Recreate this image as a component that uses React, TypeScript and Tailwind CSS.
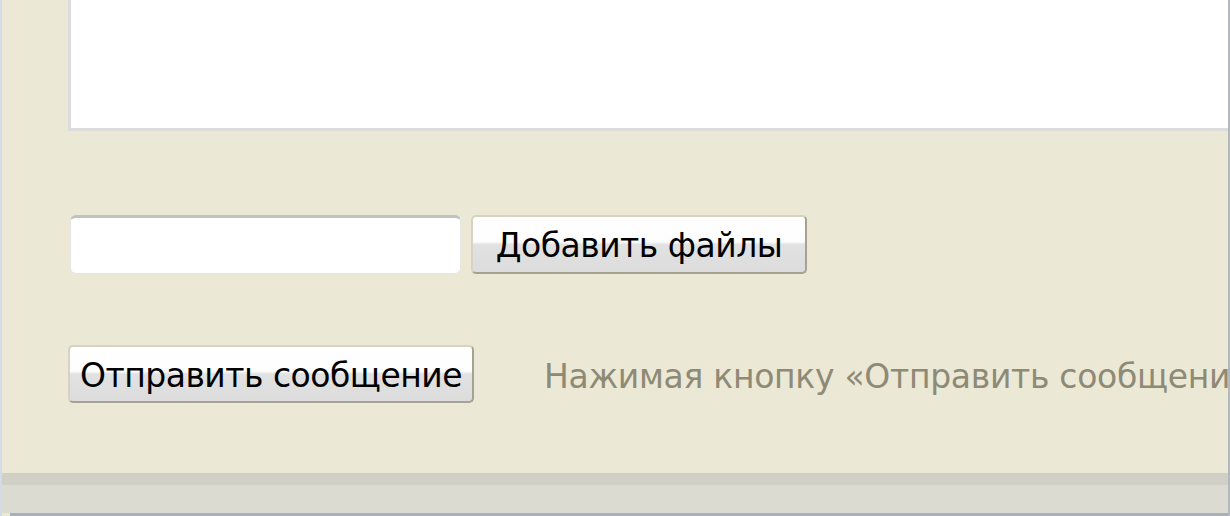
import React from "react";

export default function App() {
  const [file, setFile] = React.useState("");

  return (
    <div className="flex h-[516px] w-[1230px] overflow-hidden bg-[#ebe8d5] font-['DejaVu_Sans',sans-serif]">
      {/* left frame strip */}
      <div className="w-[2px] shrink-0 bg-[#d3dbea]" />
      <div className="flex min-w-0 flex-1 flex-col border-r-2 border-[#b3b7c0]">
        <section className="flex h-[473px] flex-col overflow-hidden pl-[66px]">
          {/* message box (bottom of textarea) */}
          <div className="h-[131px] shrink-0 border-b-[3px] border-l-[3px] border-[#dcdcdc] bg-white" />

          {/* attach files */}
          <div className="mt-[84px] flex items-center gap-[10px] pl-[2px]">
            <input
              value={file}
              onChange={(e) => setFile(e.target.value)}
              className="h-[59px] w-[391px] rounded-[6px] border border-[#e6e6e6] border-t-[3px] border-t-[#c2c2c2] bg-white px-2 outline-none"
            />
            <button className="h-[59px] w-[336px] rounded-[5px] border-2 border-[#d6d3c2] border-r-[#a5a293] border-b-[#a5a293] bg-[linear-gradient(#ffffff_0%,#fdfdfd_45%,#e2e2e2_50%,#dcdcdc_100%)] pt-[2px] text-[33px] leading-none tracking-[-0.5px] text-black">
              Добавить файлы
            </button>
          </div>

          {/* submit */}
          <div className="mt-[71px] flex items-center">
            <button className="h-[58px] w-[406px] shrink-0 rounded-[5px] border-2 border-[#d6d3c2] border-r-[#a5a293] border-b-[#a5a293] bg-[linear-gradient(#ffffff_0%,#fdfdfd_45%,#e2e2e2_50%,#dcdcdc_100%)] pt-[2px] text-[33px] leading-none tracking-[-0.5px] text-black">
              Отправить сообщение
            </button>
            <p className="ml-[70px] whitespace-nowrap pt-[4px] text-[33px] leading-none tracking-[-0.3px] text-[#8e8a76]">
              Нажимая кнопку «Отправить сообщение», я даю согласие на обработку персональных данных
            </p>
          </div>
        </section>

        {/* footer */}
        <div className="h-[12px] bg-[#d0d0c6]" />
        <div className="h-[28px] bg-[#dbdbd2]" />
        <div className="ml-[8px] h-[3px] bg-[#a9b0bd]" />
      </div>
    </div>
  );
}
